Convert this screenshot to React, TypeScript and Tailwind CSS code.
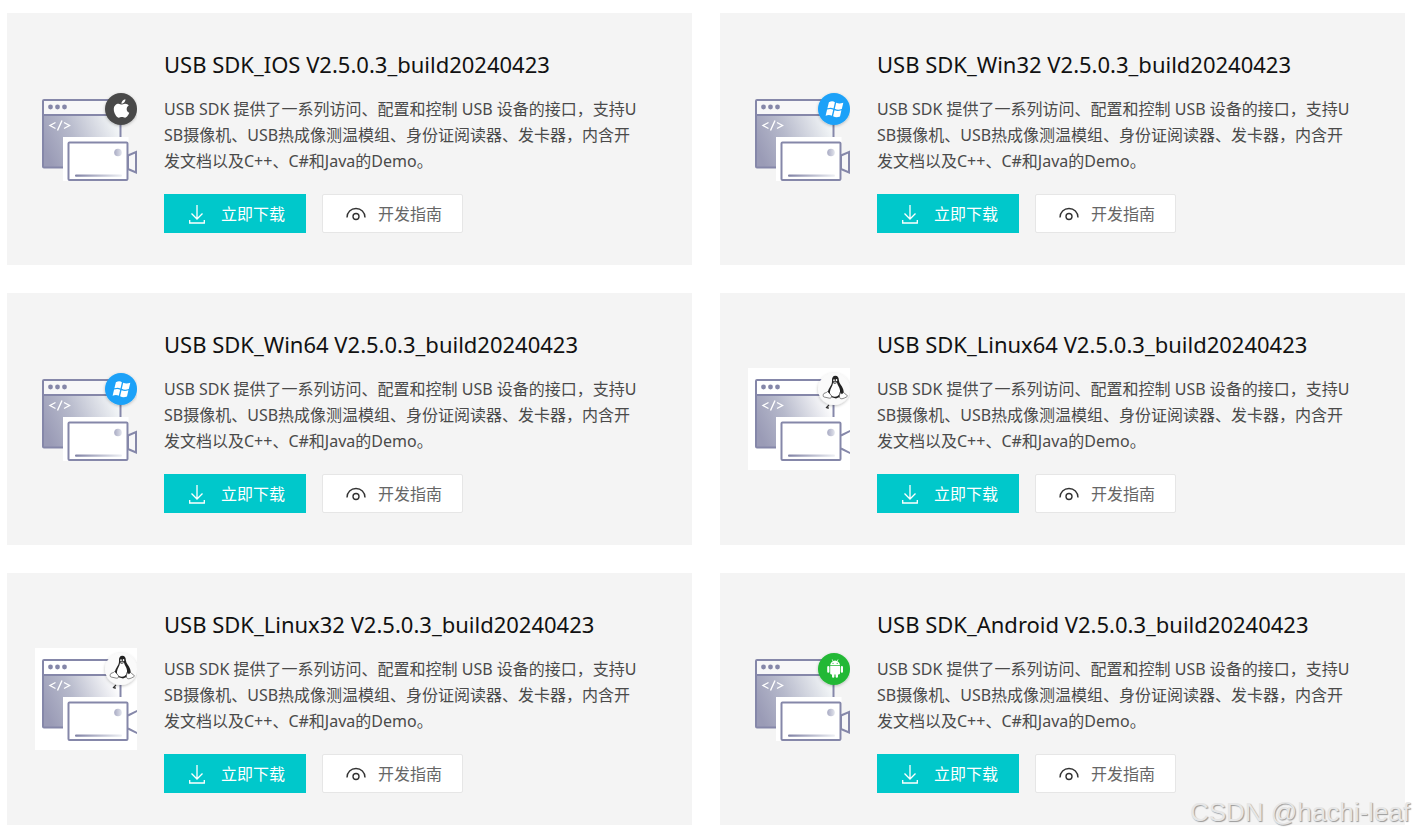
import { FaApple } from "react-icons/fa";

type Platform = "apple" | "windows" | "linux" | "android";

interface Sdk {
  name: string;
  platform: Platform;
}

const SDKS: Sdk[] = [
  { name: "IOS", platform: "apple" },
  { name: "Win32", platform: "windows" },
  { name: "Win64", platform: "windows" },
  { name: "Linux64", platform: "linux" },
  { name: "Linux32", platform: "linux" },
  { name: "Android", platform: "android" },
];

const VERSION = "V2.5.0.3_build20240423";

const DESCRIPTION = [
  "USB SDK 提供了一系列访问、配置和控制 USB 设备的接口，支持U",
  "SB摄像机、USB热成像测温模组、身份证阅读器、发卡器，内含开",
  "发文档以及C++、C#和Java的Demo。",
].join("\n");

const BADGE_COLORS: Record<Platform, string> = {
  apple: "#4a4a4a",
  windows: "#1ba1f8",
  linux: "#fafafa",
  android: "#22b835",
};

function BadgeGlyph({ platform }: { platform: Platform }) {
  if (platform === "apple") {
    return <FaApple x={76} y={10} width={21} height={21} size={21} color="#fff" />;
  }

  if (platform === "windows") {
    return (
      <g fill="#fff">
        <path d="M80.9 14.2c2.6-1.3 4.4-1 6 0l-1.4 6.2c-1.9-1-3.7-1-6.1-.1z" />
        <path d="M88.2 14.7c2.2 1.1 4.4 1 7.1 0l-1.5 6.2c-2.7 1.1-4.9 1-7-.1z" />
        <path d="M79.1 21.6c2.4-1 4.3-.8 6.1.1l-1.4 6.1c-1.8-1-3.7-1.1-6.2 0z" />
        <path d="M86.5 22.2c2.2 1 4.3 1 6.9.1L92 28.5c-2.5 1-4.8 1-6.9-.2z" />
      </g>
    );
  }

  if (platform === "android") {
    return (
      <g fill="#fff">
        <path d="M82.2 17.3c.2-2.1 1.2-3.4 2.6-4.1l-1.1-1.7.5-.3 1.2 1.7a5.4 5.4 0 0 1 3.4 0l1.2-1.7.5.3-1.1 1.7c1.4.7 2.4 2 2.6 4.1z" />
        <path d="M82.2 18.1H92v7.2c0 .7-.4 1.1-1.1 1.1H90v2.2a1.2 1.2 0 0 1-2.4 0v-2.2h-1.2v2.2a1.2 1.2 0 0 1-2.4 0v-2.2h-.8c-.6 0-1-.4-1-1.1z" />
        <rect x="79.2" y="18" width="2.2" height="6.8" rx="1.1" />
        <rect x="92.8" y="18" width="2.2" height="6.8" rx="1.1" />
        <circle cx="85" cy="15.3" r=".6" fill="#22b835" />
        <circle cx="89.2" cy="15.3" r=".6" fill="#22b835" />
      </g>
    );
  }

  return (
    <g>
      <path
        d="M84 13c-.3-3.200 1-5.200 3.300-5.200 2.500 0 3.500 2 3.600 4.800.1 2.800 3 5 4.200 8.400.9 2.700.8 4.800.1 6.600L88 30.500l-7-2c-1.500-1.500-1.700-4-.7-6.300 1.300-3.300 3.900-5.400 3.700-9.200z"
        fill="#222"
      />
      <path
        d="M85 15c1.400 1 2.600.8 4-.2.500 2.600 2.600 4.400 3 7.400.4 3.300-1.500 6.300-5 6.600-3.300.2-5.400-2.300-5-5.200.4-3.400 2.700-5.200 3-8.600z"
        fill="#fff"
      />
      <ellipse cx="86" cy="12.3" rx=".8" ry="1.1" fill="#fff" />
      <ellipse cx="88.5" cy="12.2" rx=".8" ry="1.1" fill="#fff" />
      <path d="M85 14.2l2.2-.8 2 .8-2 1.2z" fill="#aaa" />
      <path
        d="M79.6 23.5l3.300 3.500c1.400 1.600.4 3.600-1.800 3.100l-5-1.100c-1.500-.5-.8-1.600-.7-2.700.1-1.600 3-1 4.200-2.800z"
        fill="#fff"
        stroke="#555"
        strokeWidth=".7"
      />
      <path
        d="M92 24.5c.8 1.700 2.600 1.400 3.700-.1.900 1.200 1.700 2 3.200 2.800 1 .7.500 1.300-.5 1.800-1.800.7-2.500 1.600-4.400 1.800-2 .2-2.700-1.200-2.500-2.900z"
        fill="#fff"
        stroke="#555"
        strokeWidth=".7"
      />
    </g>
  );
}

function SdkIcon({ platform }: { platform: Platform }) {
  const isLinux = platform === "linux";

  return (
    <svg viewBox="0 0 102 102" className="h-[102px] w-[102px] shrink-0" aria-hidden="true">
      <defs>
        <linearGradient id={`screen-${platform}`} x1="0" y1="0.6" x2="1" y2="0.3">
          <stop offset="0" stopColor="#9a9bb6" />
          <stop offset="0.4" stopColor="#b6b9cb" />
          <stop offset="1" stopColor={isLinux ? "#ffffff" : "#f4f7f8"} />
        </linearGradient>
        <linearGradient id={`line-${platform}`} x1="0" y1="0" x2="1" y2="0">
          <stop offset="0" stopColor="#8082a5" />
          <stop offset="1" stopColor="#eef0f4" />
        </linearGradient>
        <linearGradient id={`dot-${platform}`} x1="0" y1="0" x2="1" y2="0">
          <stop offset="0" stopColor="#a9abc4" />
          <stop offset="1" stopColor="#e2e4ec" />
        </linearGradient>
        <filter id={`shadow-${platform}`} x="-30%" y="-30%" width="160%" height="160%">
          <feDropShadow dx="0" dy="1" stdDeviation="1.5" floodColor="#000" floodOpacity="0.25" />
        </filter>
      </defs>
      {isLinux && <rect width="102" height="102" fill="#fff" />}

      {/* code window */}
      <rect x="8" y="12" width="77" height="15" fill={isLinux ? "#fff" : "#f7f7f8"} />
      <rect x="8" y="27" width="77" height="52" fill={`url(#screen-${platform})`} />
      <rect x="8" y="12" width="77.5" height="67.5" rx="1" fill="none" stroke="#8587a9" strokeWidth="2" />
      <path d="M8 27h77" stroke="#8587a9" strokeWidth="2" />
      <circle cx="15.5" cy="19" r="2.4" fill="#8587a9" />
      <circle cx="22.5" cy="19" r="2.4" fill="#8587a9" />
      <circle cx="29.5" cy="19" r="2.4" fill="#8587a9" />
      <path
        d="M20.5 34.5l-5.500 3 5.500 3M29 34.500l5.500 3-5.500 3M27 32.500l-4.500 10"
        fill="none"
        stroke="#fff"
        strokeWidth="1.4"
      />
      {isLinux && <path d="M81 37l-3 3M80 39v2" stroke="#333" strokeWidth="1.2" />}

      {/* camera */}
      <rect x="28" y="49" width="65.5" height="44" fill="#fff" />
      {isLinux ? (
        <path d="M93 67.5L103 62.5M93 80.5L103 85.5" stroke="#8587a9" strokeWidth="2" />
      ) : (
        <path d="M93 67.5L101 64v20.500L93 81z" fill="#f7f7f8" stroke="#8587a9" strokeWidth="2" />
      )}
      <rect x="33.5" y="54.5" width="59" height="37.5" rx="1" fill="#fff" stroke="#8587a9" strokeWidth="2" />
      <circle cx="83" cy="64.5" r="3.8" fill={`url(#dot-${platform})`} />
      <rect x="40" y="86.5" width="47" height="2.2" rx="1" fill={`url(#line-${platform})`} />

      <circle
        cx="86"
        cy="21"
        r="16"
        fill={BADGE_COLORS[platform]}
        filter={`url(#shadow-${platform})`}
      />
      <BadgeGlyph platform={platform} />
    </svg>
  );
}

function DownloadIcon() {
  return (
    <svg viewBox="0 0 16 20" className="h-5 w-4" fill="none" stroke="currentColor" strokeWidth="1.3" aria-hidden="true">
      <path d="M8 1v14M2.500 9.500L8 15l5.500-5.500M.7 16v3h14.600v-3" />
    </svg>
  );
}

function EyeIcon() {
  return (
    <svg viewBox="0 0 20 14" className="h-3.5 w-5" fill="none" stroke="#333" strokeWidth="1.4" aria-hidden="true">
      <path d="M1 10.500C1 5 5 1.500 10 1.500s9 3.500 9 9" />
      <circle cx="10" cy="9.5" r="3" />
    </svg>
  );
}

function SdkCard({ sdk }: { sdk: Sdk }) {
  return (
    <article className="flex items-center gap-[27px] bg-[#f4f4f4] py-8 pr-6 pl-7">
      <SdkIcon platform={sdk.platform} />
      <div className="min-w-0">
        <h2 className="text-[22px] leading-[38px] text-[#111]">
          USB SDK_{sdk.name} {VERSION}
        </h2>
        <p className="mt-[13px] text-base leading-[26px] whitespace-pre-line text-[#4a4a4a]">
          {DESCRIPTION}
        </p>
        <div className="mt-5 flex gap-4">
          <button
            type="button"
            className="flex h-[39px] items-center gap-4 bg-[#00c8cb] pr-[21px] pl-[25px] text-base text-white"
          >
            <DownloadIcon />
            立即下载
          </button>
          <button
            type="button"
            className="flex h-[39px] items-center gap-3 rounded-xs border border-[#e6e6e6] bg-white pr-5 pl-[23px] text-base text-[#666]"
          >
            <EyeIcon />
            开发指南
          </button>
        </div>
      </div>
    </article>
  );
}

export default function App() {
  return (
    <main className="relative min-h-screen bg-white py-[13px] pr-[9px] pl-[7px] font-['Noto_Sans','Noto_Sans_CJK_SC',sans-serif]">
      <div className="grid grid-cols-2 gap-7">
        {SDKS.map((sdk) => (
          <SdkCard key={sdk.name} sdk={sdk} />
        ))}
      </div>
      <span className="absolute right-1 bottom-2 font-['Liberation_Sans',sans-serif] text-[26px] leading-9 text-[#e6e6e6] [text-shadow:1px_1px_1px_#999]">
        CSDN @hachi-leaf
      </span>
    </main>
  );
}
